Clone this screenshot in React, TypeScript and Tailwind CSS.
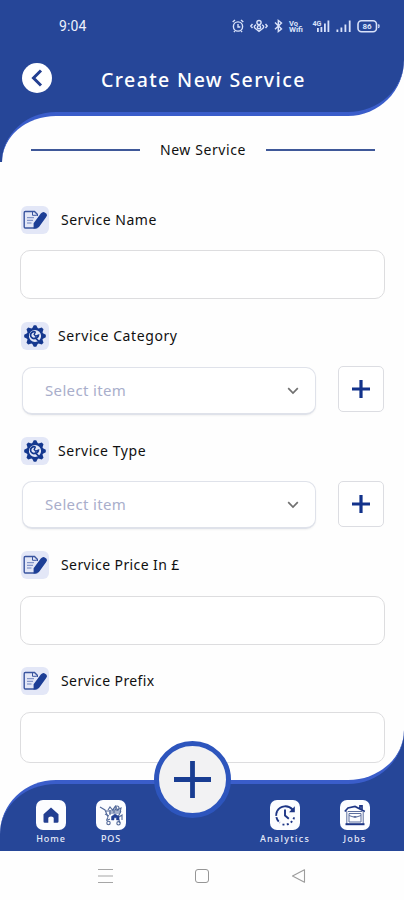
import React from "react";

function NoteIcon() {
  return (
    <svg viewBox="0 0 28 28" className="h-7 w-7 shrink-0 rounded-md bg-[#e3e7f7]" fill="none">
      <path d="M16.3 10V8.2L13.5 5.5H4.3Q3.2 5.5 3.2 6.8V20.7Q3.2 22 4.3 22H15Q16.3 22 16.3 20.5" stroke="#3a559f" strokeWidth="1.4" />
      <path d="M11.5 5.8V9.3H15.5" stroke="#3a559f" strokeWidth="1" />
      <path d="M6 11.7H13M6 14.3H12M6 17H10.5" stroke="#6d82bd" strokeWidth="1" />
      <path d="M19.8 7.6Q21.8 5.2 23.8 6.4L25.5 7.7Q26.7 9 25.2 11L17.8 21.2L12.6 22.8L12.6 17.2Z" fill="#1c3e96" />
    </svg>
  );
}

function GearIcon() {
  return (
    <svg viewBox="0 0 28 28" className="h-7 w-7 shrink-0 rounded-md bg-[#e3e7f7]" fill="none">
      <g transform="translate(14 14)">
        {[0, 45, 90, 135, 180, 225, 270, 315].map((a) => (
          <path key={a} d="M-3.2 -7L-1.2 -10.8H1.2L3.2 -7Z" fill="#15388f" transform={`rotate(${a})`} />
        ))}
        <circle r="7.1" stroke="#15388f" strokeWidth="2" />
        <path d="M.5 -3.9A3.4 3.4 0 1 0 .6 2.1L4.6 6" stroke="#15388f" strokeWidth="1.7" />
        <path d="M.5 -3.9L-.9 -1.6L.6 .2L3.6 -.9A3.5 3.5 0 0 1 .6 2.1" stroke="#15388f" strokeWidth="1.3" />
      </g>
    </svg>
  );
}

function Label({ icon, text, className }: { icon: React.ReactNode; text: string; className: string }) {
  return (
    <div className="flex h-7 items-center pl-px">
      {icon}
      <span className={`whitespace-nowrap pb-px text-[14px] text-[#101010] ${className}`}>{text}</span>
    </div>
  );
}

function SelectRow({ className }: { className: string }) {
  return (
    <div className="mt-4 flex items-start justify-between pl-[2px] pr-px">
      <div className={`flex h-12 w-[294px] items-center justify-between rounded-[10px] border border-b-2 border-[#dfe2ea] bg-white pl-[22px] pr-4 shadow-xs ${className}`}>
        <span className="text-[15px] tracking-[0.35px] text-[#a9aecb]">Select item</span>
        <svg viewBox="0 0 12 8" className="h-2 w-3" fill="none" stroke="#707070" strokeWidth="1.7">
          <path d="M1.2 1.2L6 6L10.8 1.2" />
        </svg>
      </div>
      <button className="flex h-[46px] w-[46px] items-center justify-center rounded-[5px] border border-[#dcdde2] bg-white">
        <svg viewBox="0 0 18 18" className="h-[18px] w-[18px]" stroke="#12328b" strokeWidth="3.2">
          <path d="M9 0V18M0 9H18" />
        </svg>
      </button>
    </div>
  );
}

function StatusIcons() {
  return (
    <svg viewBox="0 0 150 16" className="h-4 w-[150px]" fill="none" stroke="#d9e2fa" strokeWidth="1.4">
      <circle cx="6" cy="8.5" r="4.6" />
      <path d="M.7 4L3 2M11.3 4L9 2M6 6V9H8.3M2.8 13L2 14M9.2 13L10 14" />
      <path d="M20.5 6L18.8 8L20.5 10M33.5 6L35.2 8L33.5 10M24 6.8Q20.5 8.5 24 11L27 13.3L30 11Q33.5 8.5 30 6.8" />
      <circle cx="27" cy="4.6" r="2.1" />
      <circle cx="27" cy="9.2" r="1.6" />
      <path d="M43 4.5L49.5 11L46.3 13.5V2.5L49.5 5L43 11.3" />
      <g fill="#d9e2fa" stroke="none" fontFamily="Roboto, sans-serif" fontWeight="700">
        <text x="57" y="7.8" fontSize="6.5" textLength="9" lengthAdjust="spacingAndGlyphs">Vo</text>
        <text x="57" y="14" fontSize="6.5" textLength="14" lengthAdjust="spacingAndGlyphs">Wifi</text>
        <text x="80.5" y="8" fontSize="7" textLength="9" lengthAdjust="spacingAndGlyphs">4G</text>
        <rect x="85" y="10" width="1.8" height="4" />
        <rect x="88.5" y="9" width="1.8" height="5" />
        <rect x="92" y="5.5" width="1.8" height="8.5" />
        <rect x="95.5" y="2.5" width="1.8" height="11.5" />
        <rect x="104.5" y="11.5" width="1.8" height="2.5" />
        <rect x="108.5" y="9.5" width="1.8" height="4.5" />
        <rect x="112.5" y="6.5" width="1.8" height="7.5" />
        <rect x="116.8" y="2.5" width="1.8" height="11.5" />
        <text x="130.5" y="11" fontSize="8" textLength="9">86</text>
      </g>
      <rect x="126" y="2.7" width="18.5" height="11" rx="3.5" strokeWidth="1.6" />
      <path d="M146.5 6.3Q147.7 8.1 146.5 10" />
    </svg>
  );
}

function HomeGlyph() {
  return (
    <svg viewBox="0 0 30 30" className="h-[30px] w-[30px]" fill="#233f91">
      <path d="M15 7.5L22.5 14.3V21.5Q22.5 22.8 21.2 22.8H17.7V18Q17.7 16.5 15 16.5T12.3 18V22.8H8.8Q7.5 22.8 7.5 21.5V14.3Z" />
    </svg>
  );
}

function PosGlyph() {
  return (
    <svg viewBox="0 0 30 30" className="h-[30px] w-[30px]" fill="none" stroke="#526999" strokeWidth="1.1">
      <path d="M4 7L9 10L12 17M22 17L25 11M10 11H25M12 17L10.5 20.5M22 17L24 23" />
      <path d="M12 10L14 7L16.5 10L19.5 6L21.5 10L25 8L24 13M13 13H23M14 10V15M18 9V13M9 14L13 16" />
      <path d="M15.5 20V16.5L19 14L23 16.5V20H20.5V17.8H18V20Z" fill="#233f91" stroke="#233f91" strokeWidth=".5" />
      <path d="M10.5 20.5L14 19M23 17L26 15V20" />
      <circle cx="12.5" cy="23" r="1.7" />
      <circle cx="22.5" cy="23.3" r="1.7" />
      <circle cx="21" cy="8" r="2" />
    </svg>
  );
}

function AnalyticsGlyph() {
  return (
    <svg viewBox="0 0 30 30" className="h-[30px] w-[30px]" fill="none" stroke="#1d3585" strokeWidth="1.9">
      <path d="M22.5 9.5A9.5 9.5 0 0 0 7.2 11" />
      <path d="M7.2 11A9.5 9.5 0 0 0 9.8 22.7" strokeDasharray="5 1.3" />
      <path d="M12.5 24.3A9.5 9.5 0 0 0 24.2 17" strokeDasharray="2 2.3" />
      <path d="M24.8 6.2V12.2H19Z" fill="#1d3585" stroke="none" />
      <path d="M15 9.5V15.5L18.8 18.7" />
    </svg>
  );
}

function JobsGlyph() {
  return (
    <svg viewBox="0 0 30 30" className="h-[30px] w-[30px]" fill="none" stroke="#5d6f9e" strokeWidth="1">
      <path d="M4.8 11.5L8 8L15 6.5L24.8 11.5M20 8.5V5.8H22V9.5" stroke="#1d3585" strokeWidth="1.7" />
      <path d="M6.8 11V24M23.2 11V24M8 11.5H22M9 13.5H21V22H9ZM9 15.5L15 17.5L21 15.5M13.5 16.5H16.5" />
      <path d="M5.5 24.2H24.5" stroke="#1d3585" strokeWidth="2" />
    </svg>
  );
}

function NavItem({ icon, label, className }: { icon: React.ReactNode; label: string; className: string }) {
  return (
    <div className="flex w-[60px] shrink-0 flex-col items-center">
      <div className="rounded-[7px] bg-[#fcfdff]">{icon}</div>
      <span className={`mt-[3px] whitespace-nowrap text-[9px] font-medium leading-3 text-[#e6ebfa] ${className}`}>{label}</span>
    </div>
  );
}

export default function App() {
  return (
    <div className="relative flex h-[900px] w-[404px] flex-col overflow-hidden bg-[#fefefe] font-['Noto_Sans','Open_Sans',sans-serif]">
      <header className="h-[116px] shrink-0 rounded-br-[56px] border-b-4 border-[#3a5dca] bg-[#264698] text-white">
        <div className="flex h-[52px] items-center justify-between pl-[59px] pr-[22px]">
          <span className="font-[Roboto] text-[14px] tracking-[0.1px] text-[#edf1fc]">9:04</span>
          <StatusIcons />
        </div>
        <div className="flex h-[52px] items-center pl-[22px]">
          <button className="flex h-[30px] w-[30px] items-center justify-center rounded-full bg-white">
            <svg viewBox="0 0 12 18" className="h-[18px] w-3" fill="none" stroke="#233f91" strokeWidth="3">
              <path d="M10 1.5L2.5 9L10 16.5" />
            </svg>
          </button>
          <h1 className="ml-[49px] mt-[3px] whitespace-nowrap text-[19.5px] font-medium tracking-[1.4px]">Create New Service</h1>
        </div>
      </header>

      <div className="absolute left-0 top-[112px] h-[50px] w-[60px] bg-[#264698] pl-[2px]">
        <div className="h-full w-full rounded-tl-[54px_50px] border-t-4 border-[#3a5dca] bg-[#fefefe]" />
      </div>

      <main className="relative z-10 flex h-[664px] shrink-0 flex-col pl-5 pr-[19px]">
        <div className="mt-[22px] flex h-6 items-center justify-between pl-[11px] pr-[10px]">
          <div className="h-[2px] w-[109px] bg-[#3f5899]" />
          <span className="whitespace-nowrap pb-px text-[14px] tracking-[0.6px] text-[#101010]">New Service</span>
          <div className="h-[2px] w-[109px] bg-[#3f5899]" />
        </div>

        <section className="mt-11 h-[116px] shrink-0">
          <Label icon={<NoteIcon />} text="Service Name" className="ml-3 tracking-[0.5px]" />
          <div className="mt-4 h-[49px] rounded-[10px] border border-[#dddddf] bg-white" />
        </section>
        <section className="h-[115px] shrink-0">
          <Label icon={<GearIcon />} text="Service Category" className="ml-[9px] tracking-[0.6px]" />
          <SelectRow className="mt-px" />
        </section>
        <section className="h-[114px] shrink-0">
          <Label icon={<GearIcon />} text="Service Type" className="ml-[9px] tracking-[0.55px]" />
          <SelectRow className="" />
        </section>
        <section className="h-[116px] shrink-0">
          <Label icon={<NoteIcon />} text="Service Price In £" className="ml-3 tracking-[0.4px]" />
          <div className="mt-[17px] h-[49px] rounded-[10px] border border-[#dddddf] bg-white" />
        </section>
        <section className="shrink-0">
          <Label icon={<NoteIcon />} text="Service Prefix" className="ml-3 tracking-[0.4px]" />
          <div className="mt-[17px] h-[51px] rounded-[10px] border border-[#dddddf] bg-white" />
        </section>
      </main>

      <div className="absolute right-0 top-[730px] h-[54px] w-[56px] bg-[#264698]">
        <div className="h-full w-full rounded-br-[56px_54px] border-b-4 border-[#3a5dca] bg-[#fefefe]" />
      </div>
      <footer className="flex h-[71px] shrink-0 items-start justify-between rounded-tl-[56px_54px] border-t-4 border-[#3a5dca] bg-[#264698] pl-[21px] pr-[19px]">
        <div className="z-10 flex pt-4">
          <NavItem icon={<HomeGlyph />} label="Home" className="tracking-[0.9px]" />
          <NavItem icon={<PosGlyph />} label="POS" className="tracking-[0.9px]" />
        </div>
        <div className="z-10 flex gap-[10px] pt-4">
          <NavItem icon={<AnalyticsGlyph />} label="Analytics" className="tracking-[1.3px]" />
          <NavItem icon={<JobsGlyph />} label="Jobs" className="tracking-[1.2px]" />
        </div>
      </footer>

      <button className="absolute left-[154px] top-[741px] z-20 flex h-[77px] w-[77px] items-center justify-center rounded-full border-[5px] border-[#2d55bd] bg-[#f2f2f3]">
        <svg viewBox="0 0 37 37" className="h-[37px] w-[37px]" stroke="#193d92" strokeWidth="4.8">
          <path d="M18.5 0V37M0 18.5H37" />
        </svg>
      </button>

      <div className="flex h-[49px] items-center justify-center gap-[82px] bg-[#fefefe]">
        <svg viewBox="0 0 15 16" className="h-4 w-[15px]" stroke="#a6a6a6" strokeWidth="1.2">
          <path d="M0 1.5H15M0 8H15M0 14.5H15" />
        </svg>
        <div className="h-[14px] w-[14px] rounded-[3px] border border-[#969696]" />
        <svg viewBox="0 0 15 16" className="h-4 w-[15px]" fill="none" stroke="#9c9c9c" strokeWidth="1.1" strokeLinejoin="round">
          <path d="M13.5 1.7V14.3L1.5 8Z" />
        </svg>
      </div>
    </div>
  );
}
